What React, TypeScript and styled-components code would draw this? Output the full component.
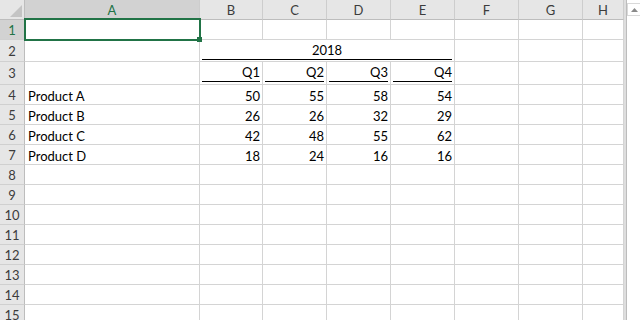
import React from 'react';
import styled, { createGlobalStyle } from 'styled-components';

const GlobalStyle = createGlobalStyle`
  html, body {
    margin: 0;
    padding: 0;
    width: 640px;
    height: 320px;
    overflow: hidden;
    background: #ffffff;
  }
  body {
    font-family: Lato, "Liberation Sans", sans-serif;
  }
`;

const Window = styled.div`
  display: flex;
  width: 640px;
  height: 320px;
  overflow: hidden;
  background: #ffffff;
`;

const GridArea = styled.div`
  position: relative;
  flex: none;
  width: 624px;
  height: 320px;
  overflow: hidden;
`;

const Grid = styled.div`
  display: grid;
  grid-template-columns: 25px 175px 63px repeat(5, 64px) 41px;
  grid-template-rows: 20px 20px 22px 23px repeat(12, 20px);
  font-family: Lato, "Liberation Sans", sans-serif;
  font-size: 13px;
  line-height: 16px;
  color: #000000;
`;

const Corner = styled.div`
  box-sizing: border-box;
  background: #e6e6e6;
  border-right: 1px solid #bdbdbd;
  border-bottom: 1px solid #bdbdbd;
  display: flex;
  align-items: flex-end;
  justify-content: flex-end;
  padding: 0 2px 2px 0;
`;

const ColHead = styled.div<{ $sel?: boolean }>`
  box-sizing: border-box;
  background: ${(p) => (p.$sel ? '#d2d2d2' : '#e6e6e6')};
  color: ${(p) => (p.$sel ? '#217346' : '#3c3c3c')};
  border-right: 1px solid #cdcdcd;
  border-bottom: 1px solid #bdbdbd;
  display: flex;
  align-items: center;
  justify-content: center;
`;

const RowHead = styled.div<{ $sel?: boolean }>`
  box-sizing: border-box;
  background: ${(p) => (p.$sel ? '#d2d2d2' : '#e6e6e6')};
  color: ${(p) => (p.$sel ? '#217346' : '#3c3c3c')};
  border-right: 1px solid #bdbdbd;
  border-bottom: 1px solid #d0d0d0;
  display: flex;
  align-items: center;
  justify-content: center;
`;

const Cell = styled.div<{ $align?: 'left' | 'right' | 'center'; $pb?: number; $span?: number; $inset?: boolean }>`
  box-sizing: border-box;
  grid-column: span ${(p) => p.$span ?? 1};
  border-right: 1px solid #d4d4d4;
  border-bottom: 1px solid #d4d4d4;
  display: flex;
  align-items: flex-end;
  justify-content: ${(p) =>
    p.$align === 'right' ? 'flex-end' : p.$align === 'center' ? 'center' : 'flex-start'};
  padding: 0 2px ${(p) => p.$pb ?? 0}px ${(p) => (p.$inset ? 2 : 3)}px;
  white-space: nowrap;
  overflow: hidden;
`;

const Underlined = styled.div<{ $align: 'right' | 'center' }>`
  flex: 1;
  text-align: ${(p) => p.$align};
  padding-bottom: 1px;
  border-bottom: 1px solid #000000;
`;

const Selection = styled.div`
  position: absolute;
  left: 24px;
  top: 18px;
  width: 177px;
  height: 23px;
  box-sizing: border-box;
  border: 2px solid #217346;
  pointer-events: none;
`;

const FillHandle = styled.div`
  position: absolute;
  left: 171px;
  top: 17px;
  width: 5px;
  height: 5px;
  background: #217346;
`;

const Gutter = styled.div`
  flex: none;
  box-sizing: border-box;
  width: 3px;
  height: 320px;
  background: #dedede;
  border-right: 1px solid #bcbcbc;
`;

const ScrollBar = styled.div`
  flex: none;
  width: 13px;
  height: 320px;
  background: #ffffff;
  display: flex;
  flex-direction: column;
  padding-top: 3px;
  box-sizing: border-box;
`;

const ScrollButton = styled.div`
  box-sizing: border-box;
  height: 13px;
  border: 1px solid #d9d9d9;
  border-right: none;
  display: flex;
  align-items: center;
  justify-content: center;
`;

const cols = ['A', 'B', 'C', 'D', 'E', 'F', 'G', 'H'];

const data: [string, number, number, number, number][] = [
  ['Product A', 50, 55, 58, 54],
  ['Product B', 26, 26, 32, 29],
  ['Product C', 42, 48, 55, 62],
  ['Product D', 18, 24, 16, 16],
];

const EmptyCells: React.FC<{ count: number; pb?: number }> = ({ count, pb }) => (
  <>
    {Array.from({ length: count }).map((_, i) => (
      <Cell key={i} $pb={pb} />
    ))}
  </>
);

export default function App() {
  return (
    <>
      <GlobalStyle />
      <Window>
        <GridArea>
          <Grid>
            <Corner>
              <svg width="12" height="12" viewBox="0 0 12 12">
                <polygon points="12,0 12,12 0,12" fill="#c4c4c4" />
              </svg>
            </Corner>
            {cols.map((c) => (
              <ColHead key={c} $sel={c === 'A'}>
                {c}
              </ColHead>
            ))}

            <RowHead $sel>1</RowHead>
            <EmptyCells count={8} />

            <RowHead>2</RowHead>
            <Cell />
            <Cell $span={4} $inset $pb={1}>
              <Underlined $align="center">2018</Underlined>
            </Cell>
            <EmptyCells count={3} />

            <RowHead>3</RowHead>
            <Cell />
            {['Q1', 'Q2', 'Q3', 'Q4'].map((q) => (
              <Cell key={q} $inset $pb={2}>
                <Underlined $align="right">{q}</Underlined>
              </Cell>
            ))}
            <EmptyCells count={3} />

            {data.map((row, i) => (
              <React.Fragment key={row[0]}>
                <RowHead>{i + 4}</RowHead>
                <Cell>{row[0]}</Cell>
                {row.slice(1).map((v, j) => (
                  <Cell key={j} $align="right">
                    {v}
                  </Cell>
                ))}
                <EmptyCells count={3} />
              </React.Fragment>
            ))}

            {Array.from({ length: 8 }).map((_, i) => (
              <React.Fragment key={i}>
                <RowHead>{i + 8}</RowHead>
                <EmptyCells count={8} />
              </React.Fragment>
            ))}
          </Grid>
          <Selection>
            <FillHandle />
          </Selection>
        </GridArea>
        <Gutter />
        <ScrollBar>
          <ScrollButton>
            <svg width="7" height="4" viewBox="0 0 7 4">
              <polygon points="3.5,0 7,4 0,4" fill="#8a8a8a" />
            </svg>
          </ScrollButton>
        </ScrollBar>
      </Window>
    </>
  );
}
